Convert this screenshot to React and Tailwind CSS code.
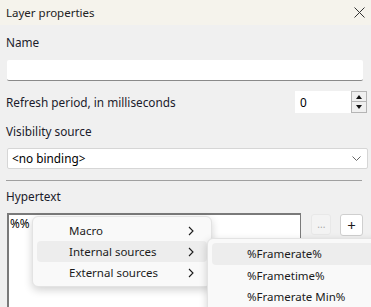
import React from 'react';

const font = { fontFamily: '"Noto Sans", "Open Sans", sans-serif' };

const Chevron = () => (
  <svg width="6" height="10" viewBox="0 0 6 10" fill="none">
    <path d="M1 1l4 4-4 4" stroke="#1b1b1b" strokeWidth="1.1" />
  </svg>
);

const App = () => {
  const menu = ['Macro', 'Internal sources', 'External sources'];
  const sub = ['%Framerate%', '%Frametime%', '%Framerate Min%'];

  return (
    <div className="relative w-[371px] h-[307px] overflow-hidden bg-[#f0f0f0] text-[11.8px] text-[#1b1b2b]" style={font}>
      {/* Title bar */}
      <div className="h-[25px] bg-[#f5f3ec] flex items-center justify-between pl-[6px] pr-[6px]">
        <span className="text-[11.5px] text-[#222]">Layer properties</span>
        <svg width="11" height="11" viewBox="0 0 11 11">
          <path d="M0.5 0.5l10 10M10.5 0.5l-10 10" stroke="#333" strokeWidth="1" />
        </svg>
      </div>

      <div className="pl-[6px] pr-[8px]">
        <div className="pt-[9px] h-[25px] leading-[16px]">Name</div>
        <div className="mt-[10px] ml-[1px] h-[21px] bg-white border-b border-[#8a8a8a] rounded-[2px]" />

        <div className="mt-[10px] h-[22px] flex items-center justify-between -mr-[4px]">
          <span className="pt-[2px]">Refresh period, in milliseconds</span>
          <div className="flex h-[22px]">
            <div className="w-[56px] bg-white pl-[5px] leading-[22px] text-black">0</div>
            <div className="w-[16px] flex flex-col">
              <div className="h-[11px] bg-[#f0f0f0] border border-[#b5b5b5] flex items-center justify-center">
                <svg width="6" height="4" viewBox="0 0 6 4"><path d="M0 4L3 0l3 4z" fill="#111" /></svg>
              </div>
              <div className="h-[11px] bg-[#f0f0f0] border border-[#b5b5b5] border-t-0 flex items-center justify-center">
                <svg width="6" height="4" viewBox="0 0 6 4"><path d="M0 0l3 4 3-4z" fill="#111" /></svg>
              </div>
            </div>
          </div>
        </div>

        <div className="mt-[10px] h-[16px] leading-[16px]">Visibility source</div>
        <div className="mt-[9px] ml-[1px] -mr-[5px] h-[21px] bg-white border border-[#d6d6d6] rounded-[2px] flex items-center justify-between pl-[4px] pr-[6px]">
          <span className="text-black">&lt;no binding&gt;</span>
          <svg width="9" height="5" viewBox="0 0 9 5" fill="none">
            <path d="M0.5 0.5l4 4 4-4" stroke="#666" strokeWidth="1" />
          </svg>
        </div>

        <div className="mt-[11px] h-px bg-[#a0a0a0] mr-[1px]" />

        <div className="mt-[7px] h-[16px] leading-[16px]">Hypertext</div>

        <div className="mt-[9px] flex items-start">
          <div className="ml-[1px] w-[298px] h-[100px] bg-white border border-[#7a7a7a] border-t-2 border-l-2 pl-[1px] leading-[16px] text-black">%%</div>
          <div className="ml-[10px] mt-[1px] w-[20px] h-[21px] bg-[#f3f3f3] border border-[#e8e8e8] rounded-[3px] flex items-center justify-center text-[#a8a8a8] text-[10px]">...</div>
          <div className="ml-[9px] mt-[1px] w-[23px] h-[22px] bg-white border border-[#cfcfcf] rounded-[3px] flex items-center justify-center text-[15px] leading-none text-[#1b1b1b]">+</div>
        </div>
      </div>

      {/* Context menu */}
      <div className="absolute left-[32px] top-[216px] w-[180px] h-[71px] bg-[#f9f9f9] rounded-[6px] border border-[#e3e3e3] shadow-[0_3px_8px_rgba(0,0,0,0.18)] py-[3px] px-[4px] flex flex-col text-[11.5px] text-[#1b1b1b]">
        {menu.map((m, i) => (
          <div
            key={m}
            className={`h-[22px] flex items-center justify-between pl-[32px] pr-[13px] rounded-[4px] ${i === 1 ? 'bg-[#ededed]' : ''}`}
          >
            <span>{m}</span>
            <Chevron />
          </div>
        ))}
      </div>

      {/* Sub menu */}
      <div className="absolute left-[207px] top-[238px] w-[175px] h-[80px] bg-[#f9f9f9] rounded-[6px] border border-[#e3e3e3] shadow-[0_3px_8px_rgba(0,0,0,0.18)] pt-[4px] pl-[4px] flex flex-col text-[11.5px] text-[#1b1b1b]">
        {sub.map((s, i) => (
          <div
            key={s}
            className={`h-[21.5px] flex items-center pl-[35px] rounded-[4px] ${i === 0 ? 'bg-[#ededed]' : ''}`}
          >
            {s}
          </div>
        ))}
      </div>
    </div>
  );
};

export default App;
